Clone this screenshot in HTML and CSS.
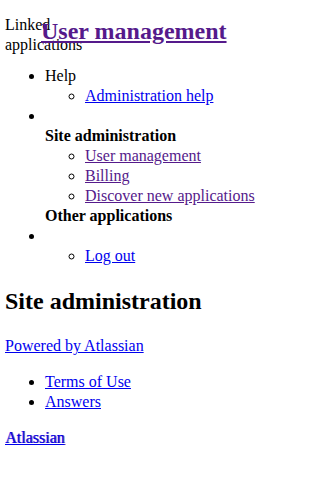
FILE: index.html
```html
<!DOCTYPE html>
<html lang="en">
<head>
<meta charset="utf-8">
<title>User management</title>
<link rel="stylesheet" href="styles.css">
</head>
<body>
<header class="app-header">
  <div class="linked-apps">Linked applications</div>
  <h2 class="page-title"><a class="visited" href="#">User management</a></h2>
</header>
<ul class="nav">
  <li>Help
    <ul class="sub">
      <li><a href="#">Administration help</a></li>
    </ul>
  </li>
  <li><br>
    <div class="group-title">Site administration</div>
    <ul class="sub">
      <li><a class="visited" href="#">User management</a></li>
      <li><a class="visited" href="#">Billing</a></li>
      <li><a class="visited" href="#">Discover new applications</a></li>
    </ul>
    <div class="group-title">Other applications</div>
  </li>
  <li><br>
    <ul class="sub">
      <li><a href="#">Log out</a></li>
    </ul>
  </li>
</ul>
<h2 class="section-title">Site administration</h2>
<p class="powered"><a href="#">Powered by Atlassian</a></p>
<ul class="footer-links">
  <li><a href="#">Terms of Use</a></li>
  <li><a href="#">Answers</a></li>
</ul>
<div class="footer-logo"><a href="#">Atlassian</a></div>
</body>
</html>
```
FILE: styles.css
```css
html, body {
  background: #ffffff;
}
body {
  margin: 0 5px;
  font-family: "Liberation Serif", "Times New Roman", serif;
  font-size: 16px;
  line-height: 1.25;
  color: #000000;
}
a {
  color: #0000ee;
}
a.visited {
  color: #551a8b;
}
.app-header {
  position: relative;
  padding: 15px 0 11px;
}
.linked-apps {
  width: 90px;
}
.page-title {
  position: absolute;
  top: 16px;
  left: 36px;
  margin: 0;
  font-size: 24px;
  font-weight: bold;
  line-height: 30px;
  white-space: nowrap;
}
.nav {
  margin: 0;
  padding-left: 40px;
  list-style: disc;
}
.sub {
  margin: 0;
  padding-left: 40px;
  list-style: circle;
}
.group-title {
  font-weight: bold;
}
.section-title {
  margin: 20px 0;
  font-size: 24px;
  font-weight: bold;
  line-height: 30px;
}
.powered {
  margin: 16px 0;
}
.footer-links {
  margin: 16px 0 16px;
  padding-left: 40px;
  list-style: disc;
}
.footer-logo a {
  text-shadow: 1px 0 0 rgba(85, 26, 139, 0.8);
}
```
